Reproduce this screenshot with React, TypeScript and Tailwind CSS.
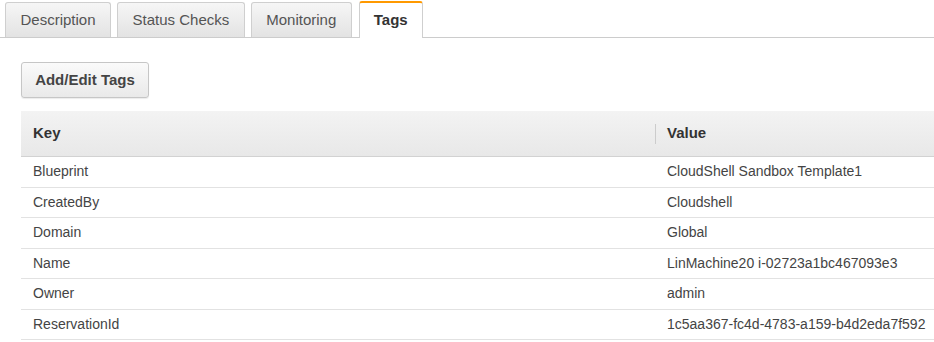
const tabs = ["Description", "Status Checks", "Monitoring"];

const tags: [string, string][] = [
  ["Blueprint", "CloudShell Sandbox Template1"],
  ["CreatedBy", "Cloudshell"],
  ["Domain", "Global"],
  ["Name", "LinMachine20 i-02723a1bc467093e3"],
  ["Owner", "admin"],
  ["ReservationId", "1c5aa367-fc4d-4783-a159-b4d2eda7f592"],
];

export default function App() {
  return (
    <div className="w-[934px] h-[342px] overflow-hidden bg-white font-['Liberation_Sans',Arial,sans-serif]">
      {/* Tabs */}
      <div className="flex items-end gap-[6px] pl-[5px] h-[38px] border-b border-[#cccccc]">
        {tabs.map((t) => (
          <div
            key={t}
            className="h-[35px] px-[14.5px] flex items-center border border-b-0 border-[#cfcfcf] rounded-t-[3px] bg-linear-to-b from-[#f6f6f6] to-[#e3e3e3] text-[15px] text-[#545454]"
          >
            {t}
          </div>
        ))}
        <div className="h-[37px] -mb-px ml-[1px] px-[14px] flex items-center border border-b-0 border-[#cfcfcf] border-t-2 border-t-[#ff9900] rounded-t-[3px] bg-white text-[15px] font-bold text-[#333]">
          Tags
        </div>
      </div>

      {/* Actions */}
      <div className="pl-[21px] pt-[24px]">
        <button className="h-[36px] w-[128px] rounded-[3px] border border-[#c6c6c6] bg-linear-to-b from-[#fafafa] to-[#e9e9e9] shadow-[0_1px_1px_rgba(0,0,0,0.08)] text-[15px] font-bold text-[#444]">
          Add/Edit Tags
        </button>
      </div>

      {/* Table */}
      <div className="ml-[21px] mt-[13px]">
        <div className="flex h-[46px] items-center border-b border-[#d2d2d2] bg-linear-to-b from-[#f3f3f3] to-[#e8e8e8] text-[15px] font-bold text-[#333]">
          <div className="w-[634px] pl-[12px]">Key</div>
          <div className="h-[20px] w-px bg-[#cccccc]" />
          <div className="pl-[11px]">Value</div>
        </div>
        {tags.map(([k, v]) => (
          <div
            key={k}
            className="flex h-[30.5px] items-center border-b border-[#e2e2e2] text-[14px] text-[#444]"
          >
            <div className="w-[635px] pl-[12px]">{k}</div>
            <div className="pl-[11px]">{v}</div>
          </div>
        ))}
      </div>
    </div>
  );
}
